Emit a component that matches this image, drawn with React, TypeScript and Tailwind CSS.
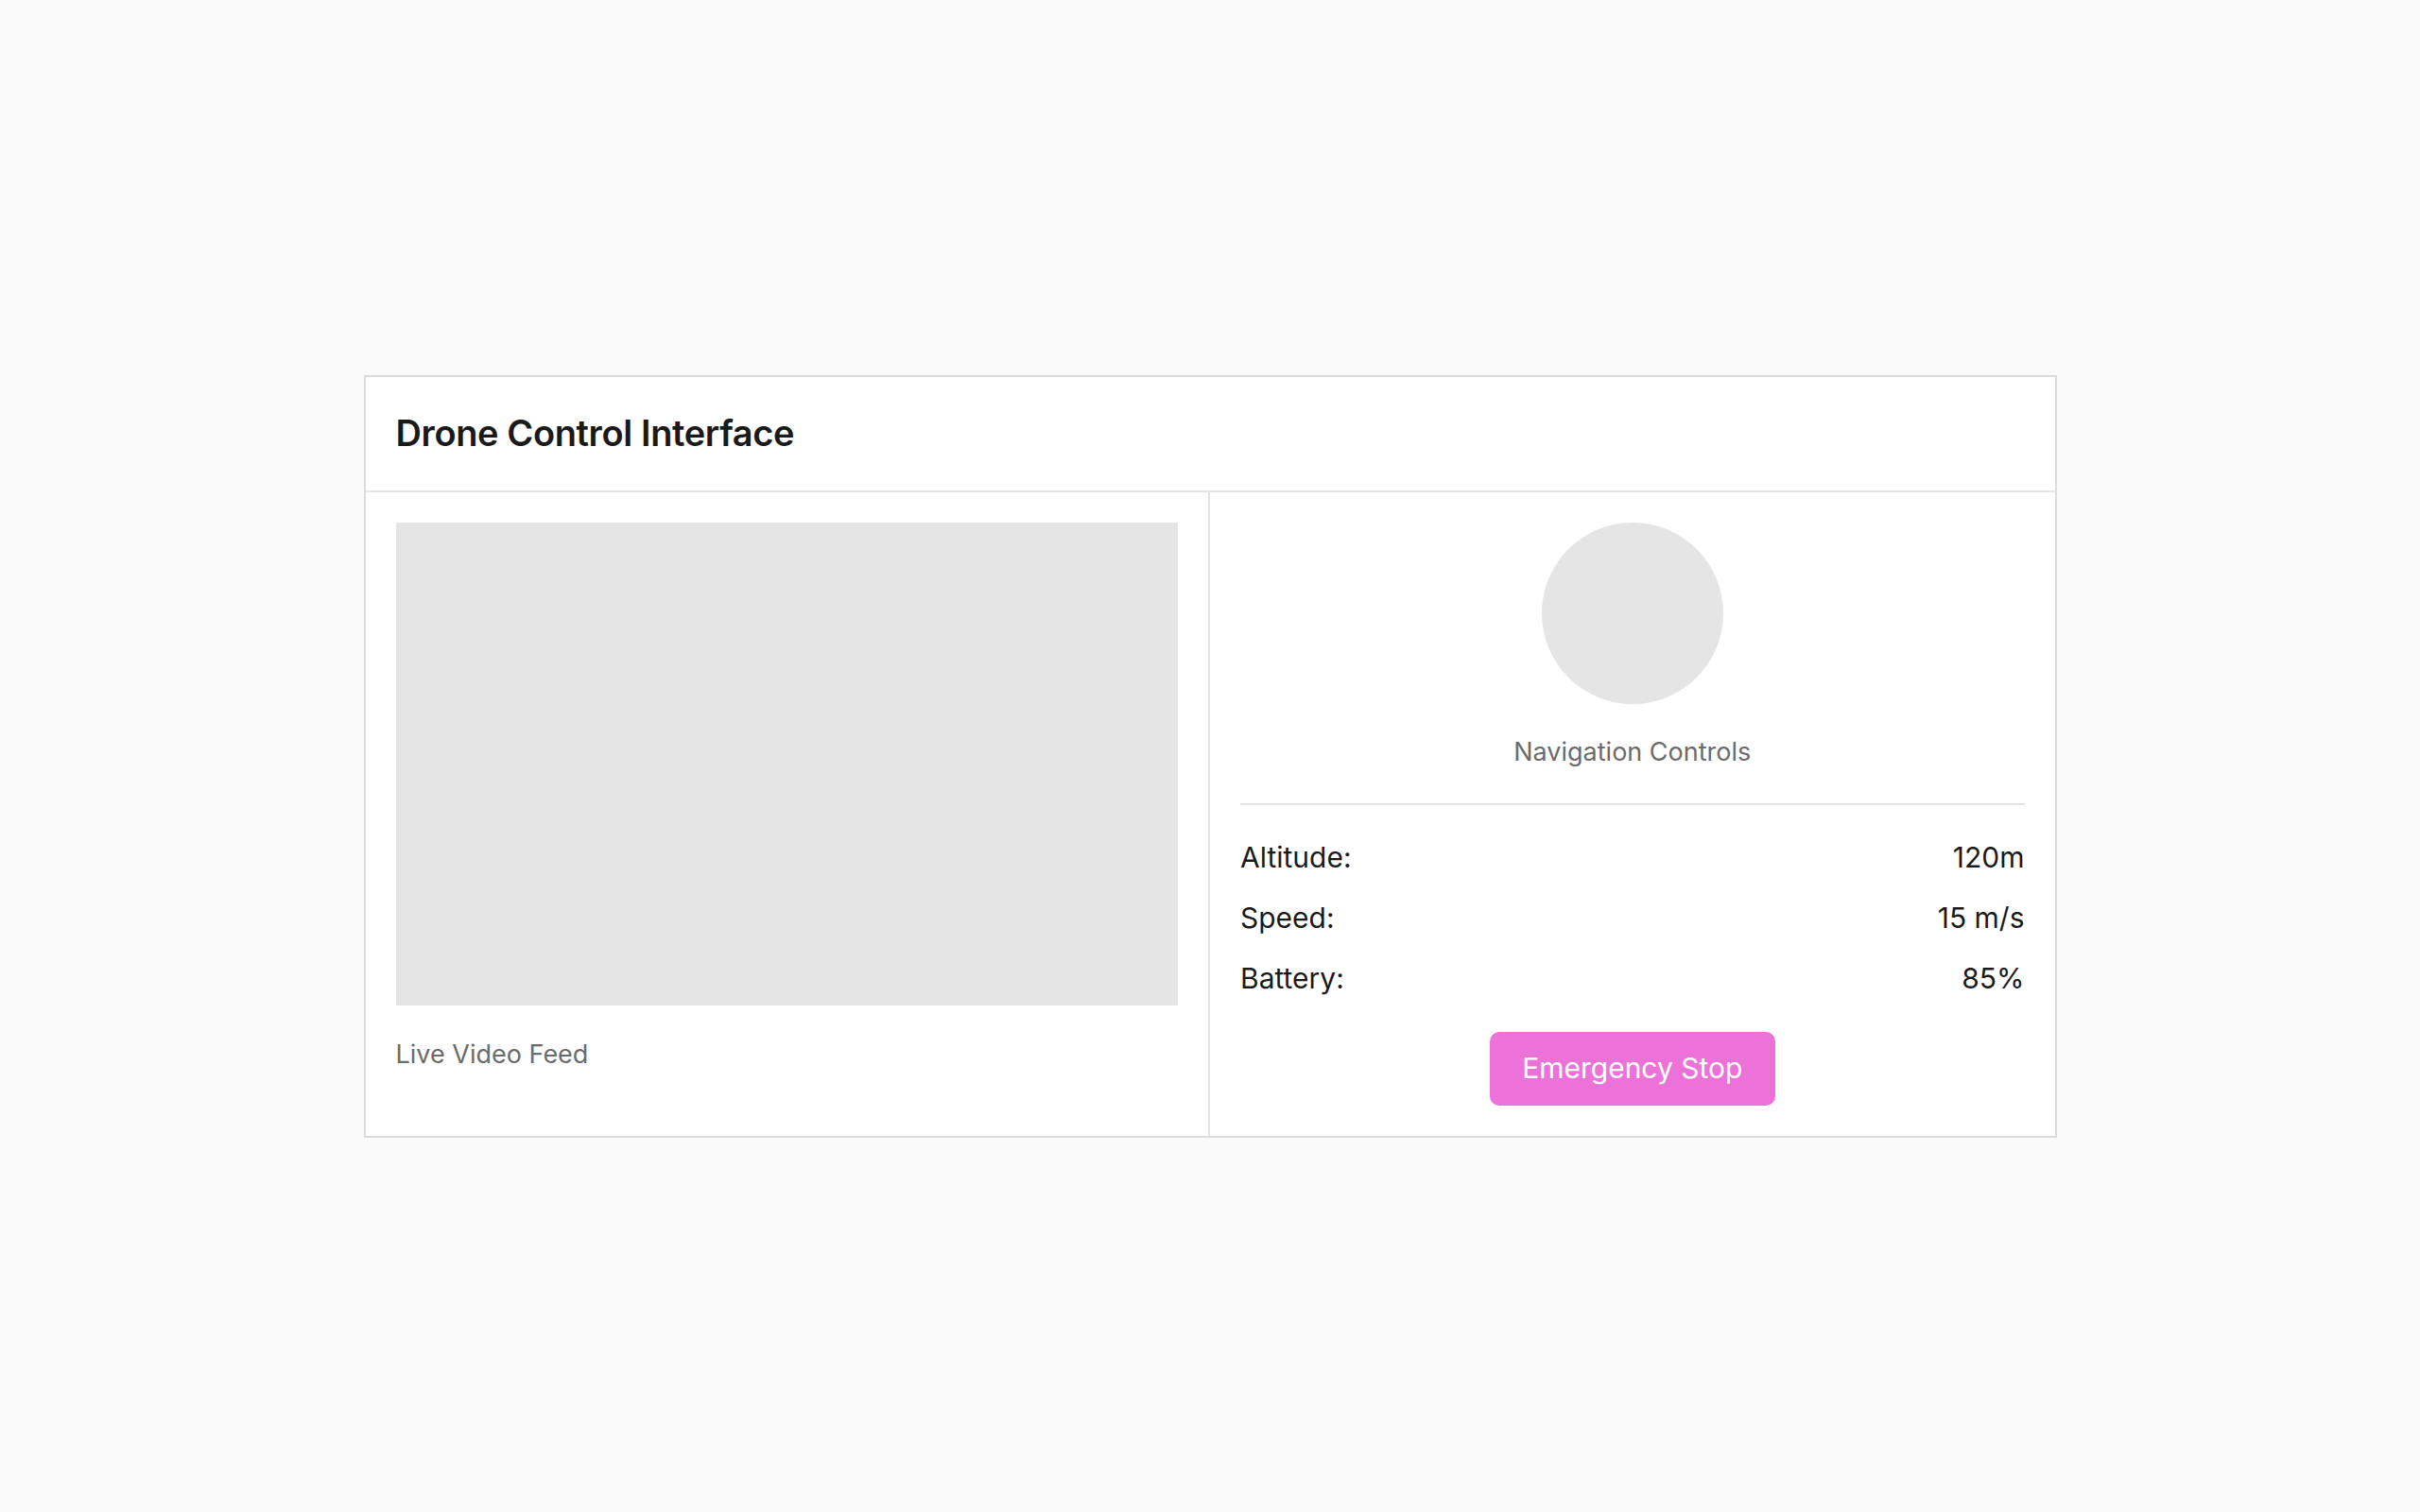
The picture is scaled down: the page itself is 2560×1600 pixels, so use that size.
export default function App() {
  return (
    <div className="min-h-screen w-full bg-[#fafafa] flex items-center justify-center" style={{ fontFamily: 'Inter, "Noto Sans", sans-serif' }}>
      <div className="w-[1791px] bg-white border-2 border-[#dcdcdc] flex flex-col">
        <div className="h-[122px] px-8 flex items-center border-b-2 border-[#e3e3e3]">
          <h1 className="text-[38px] font-semibold text-[#1a1a1a] tracking-[-0.01em]">Drone Control Interface</h1>
        </div>
        <div className="grid grid-cols-2">
          <div className="p-8 border-r-2 border-[#e3e3e3] flex flex-col">
            <div className="h-[511px] bg-[#e5e5e5]" />
            <div className="mt-8 text-[27px] leading-[40px] text-[#6b6b6b]">Live Video Feed</div>
          </div>
          <div className="p-8 flex flex-col">
            <div className="flex flex-col items-center pb-[34px] border-b-2 border-[#e3e3e3]">
              <div className="w-[192px] h-[192px] rounded-full bg-[#e5e5e5]" />
              <div className="mt-[31px] text-[27px] leading-[40px] text-[#6b6b6b]">Navigation Controls</div>
            </div>
            <div className="mt-6 flex flex-col text-[30px] text-[#1a1a1a]">
              {[["Altitude:", "120m"], ["Speed:", "15 m/s"], ["Battery:", "85%"]].map(([k, v]) => (
                <div key={k} className="h-16 flex items-center justify-between">
                  <span>{k}</span>
                  <span>{v}</span>
                </div>
              ))}
            </div>
            <div className="mt-6 flex justify-center">
              <button className="h-[78px] w-[302px] rounded-[10px] bg-[#ec72d9] text-white text-[30px]">Emergency Stop</button>
            </div>
          </div>
        </div>
      </div>
    </div>
  );
}
